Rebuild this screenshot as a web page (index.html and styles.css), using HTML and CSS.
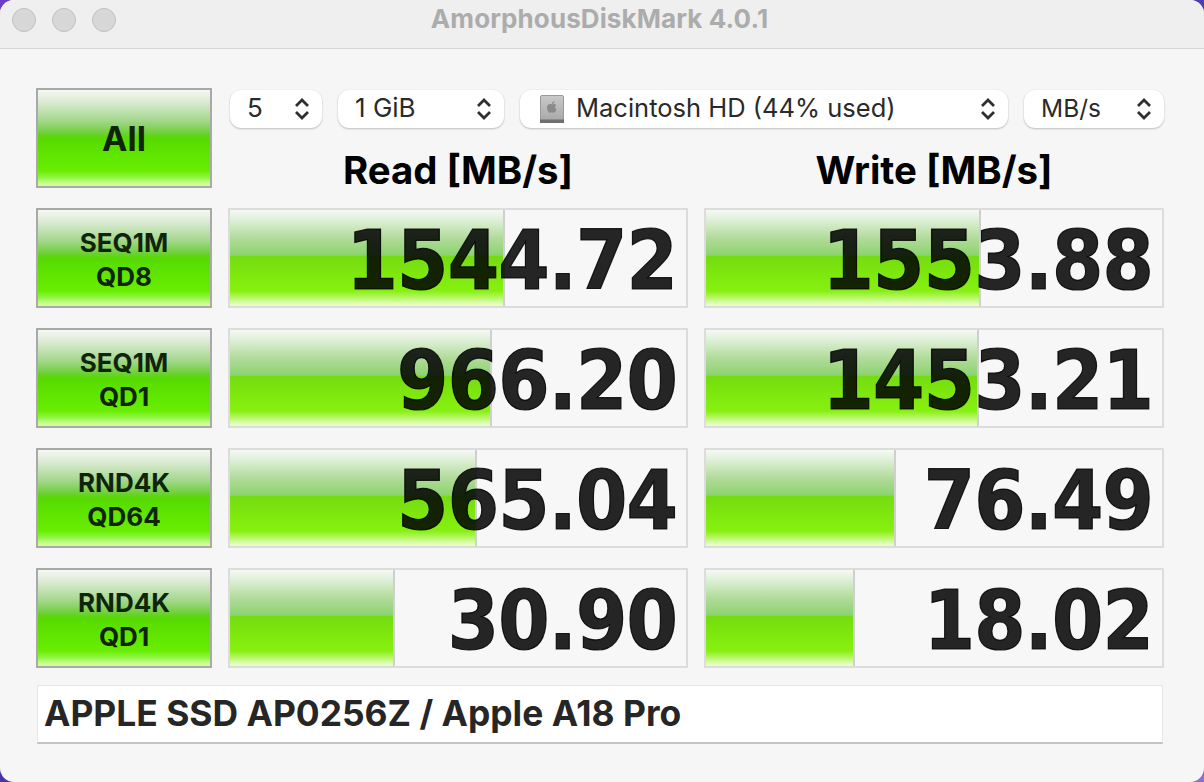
FILE: index.html
```html
<!DOCTYPE html>
<html lang="en">
<head>
<meta charset="utf-8">
<title>AmorphousDiskMark 4.0.1</title>
<link rel="stylesheet" href="styles.css">
</head>
<body>
<div class="window">
  <header class="titlebar">
    <div class="lights"><span class="light"></span><span class="light"></span><span class="light"></span></div>
    <div class="title">AmorphousDiskMark 4.0.1</div>
  </header>
  <main class="content">
    <div class="grid">
      <button class="btn btn-all">All</button>
      <div class="top">
        <div class="selects">
          <div class="select s-count"><span>5</span><svg class="chev" viewBox="0 0 16 24"><path d="M2 9 8 3 14 9M2 15 8 21 14 15"/></svg></div>
          <div class="select s-size"><span>1 GiB</span><svg class="chev" viewBox="0 0 16 24"><path d="M2 9 8 3 14 9M2 15 8 21 14 15"/></svg></div>
          <div class="select s-disk">
            <svg class="disk" viewBox="0 0 24 28"><defs><linearGradient id="dg" x1="0" y1="0" x2="0" y2="1"><stop offset="0" stop-color="#c9c9c9"/><stop offset="1" stop-color="#a6a6a6"/></linearGradient></defs><rect x="0.500" y="0.500" width="23" height="27" rx="1.500" fill="url(#dg)" stroke="#9a9a9a"/><rect x="0" y="24.500" width="24" height="3.500" fill="#6f6f6f"/><path d="M12 9.500c1.200-.8 3.200-.9 4.200.6-1.800 1.200-1.400 3.500.4 4.200-.7 1.900-2 3.400-3 3.400-.7 0-1-.4-1.700-.4s-1 .4-1.700.4c-1.500 0-3.200-3-3.200-5.300 0-2.900 3-4 5-2.900zM12 9c0-1.500 1-2.700 2.500-3 .1 1.600-1 2.900-2.500 3z" fill="#8a8a8a"/></svg>
            <span>Macintosh HD (44% used)</span><svg class="chev" viewBox="0 0 16 24"><path d="M2 9 8 3 14 9M2 15 8 21 14 15"/></svg></div>
          <div class="select s-unit"><span>MB/s</span><svg class="chev" viewBox="0 0 16 24"><path d="M2 9 8 3 14 9M2 15 8 21 14 15"/></svg></div>
        </div>
        <div class="heads"><div class="head">Read [MB/s]</div><div class="head">Write [MB/s]</div></div>
      </div>

      <button class="btn">SEQ1M<br>QD8</button>
      <div class="cell"><div class="bar" style="width:275px"></div><div class="val">1544.72</div></div>
      <div class="cell"><div class="bar" style="width:275px"></div><div class="val">1553.88</div></div>

      <button class="btn">SEQ1M<br>QD1</button>
      <div class="cell"><div class="bar" style="width:262px"></div><div class="val">966.20</div></div>
      <div class="cell"><div class="bar" style="width:273px"></div><div class="val">1453.21</div></div>

      <button class="btn">RND4K<br>QD64</button>
      <div class="cell"><div class="bar" style="width:247px"></div><div class="val">565.04</div></div>
      <div class="cell"><div class="bar" style="width:190px"></div><div class="val">76.49</div></div>

      <button class="btn">RND4K<br>QD1</button>
      <div class="cell"><div class="bar" style="width:165px"></div><div class="val">30.90</div></div>
      <div class="cell"><div class="bar" style="width:149px"></div><div class="val">18.02</div></div>
    </div>
    <div class="comment">APPLE SSD AP0256Z / Apple A18 Pro</div>
  </main>
</div>
</body>
</html>
```
FILE: styles.css
```css
* { box-sizing: border-box; }
html, body { margin: 0; height: 100%; }
body {
  width: 1204px;
  height: 782px;
  overflow: hidden;
  background: linear-gradient(135deg, #6a3fc8 0%, #3b2fa8 50%, #8a70d8 100%);
  font-family: Inter, "Liberation Sans", sans-serif;
}
.window {
  height: 782px;
  background: #f6f6f6;
  border-radius: 14px;
  overflow: hidden;
  display: flex;
  flex-direction: column;
}
.titlebar {
  position: relative;
  height: 49px;
  flex: none;
  background: #efefef;
  border-bottom: 1px solid #d4d4d4;
  display: flex;
  align-items: center;
  justify-content: center;
}
.lights {
  position: absolute;
  left: 12px;
  top: 8px;
  display: flex;
  gap: 16px;
}
.light {
  width: 24px;
  height: 24px;
  border-radius: 50%;
  background: #d7d7d7;
  border: 1px solid #bfbfbf;
}
.title {
  font-size: 26px;
  font-weight: 700;
  color: #acacac;
  padding-bottom: 12px;
  padding-right: 5px;
  letter-spacing: 0.1px;
}
.content {
  padding: 39px 40px 0 36px;
}
.grid {
  display: grid;
  grid-template-columns: 176px 460px 460px;
  grid-auto-rows: 100px;
  column-gap: 16px;
  row-gap: 20px;
}
.btn {
  margin: 0;
  padding: 3px 0 0;
  border: 2px solid #a9a9a9;
  font-family: Inter, "Liberation Sans", sans-serif;
  font-size: 26px;
  line-height: 34px;
  font-weight: 700;
  color: #10240a;
  background: linear-gradient(180deg, #f5f8f3 0%, #dcebd5 12%, #a3d78c 32%, #6ecf38 45%, #56da00 50%, #5ee400 65%, #68ee00 84%, #90f544 91%, #d0ff98 98%);
}
.btn-all { font-size: 34px; padding-top: 2px; }
.top {
  grid-column: 2 / 4;
  display: flex;
  flex-direction: column;
}
.selects {
  display: flex;
  gap: 16px;
  padding: 2px 0 0 2px;
}
.select {
  height: 38px;
  background: #fff;
  border-radius: 11px;
  box-shadow: 0 1px 2px rgba(0, 0, 0, 0.22), 0 0 1px rgba(0, 0, 0, 0.12);
  display: flex;
  align-items: center;
  font-size: 26px;
  color: #2a2a2a;
  padding-left: 17px;
  padding-right: 12px;
}
.select span { flex: 1; white-space: nowrap; padding-bottom: 3px; }
.s-count { width: 92px; }
.s-size { width: 166px; }
.s-disk { width: 488px; padding-left: 20px; font-size: 25.500px; }
.s-unit { width: 140px; font-size: 24.500px; }
.chev {
  width: 16px;
  height: 24px;
  flex: none;
  fill: none;
  stroke: #2f2f2f;
  stroke-width: 2.800;
}
.disk { width: 24px; height: 28px; flex: none; margin-right: 12px; }
.heads {
  display: grid;
  grid-template-columns: 460px 460px;
  column-gap: 16px;
  padding-top: 24px;
}
.head {
  text-align: center;
  font-size: 38.400px;
  line-height: 36px;
  font-weight: 700;
  color: #000;
}
.cell {
  position: relative;
  border: 2px solid #dcdcdc;
  background: #f7f7f7;
  overflow: hidden;
}
.bar {
  position: absolute;
  left: 0;
  top: 0;
  bottom: 0;
  border-right: 2px solid #cfcfcf;
  background: linear-gradient(180deg, #f6f8f4 0%, #dff0d8 10%, #b0da98 30%, #8cd46e 47%, #74dc10 48.500%, #80ea0e 70%, #86f010 84%, #b4f660 91%, #e4ffc0 98%);
}
.val {
  position: relative;
  top: 3px;
  text-align: right;
  padding-right: 9px;
  font-family: "DejaVu Sans", sans-serif;
  font-stretch: condensed;
  font-weight: 700;
  font-size: 82px;
  letter-spacing: -0.800px;
  line-height: 96px;
  color: rgba(0, 0, 0, 0.85);
  -webkit-text-stroke: 1.200px rgba(0, 0, 0, 0.85);
}
.comment {
  margin: 17px 0 0 1px;
  width: 1126px;
  height: 59px;
  background: #fff;
  border: 1px solid #e6e6e6;
  border-bottom: 2px solid #c4c4c4;
  padding-left: 6px;
  font-size: 35.400px;
  line-height: 55px;
  font-weight: 700;
  color: #262626;
}
```
